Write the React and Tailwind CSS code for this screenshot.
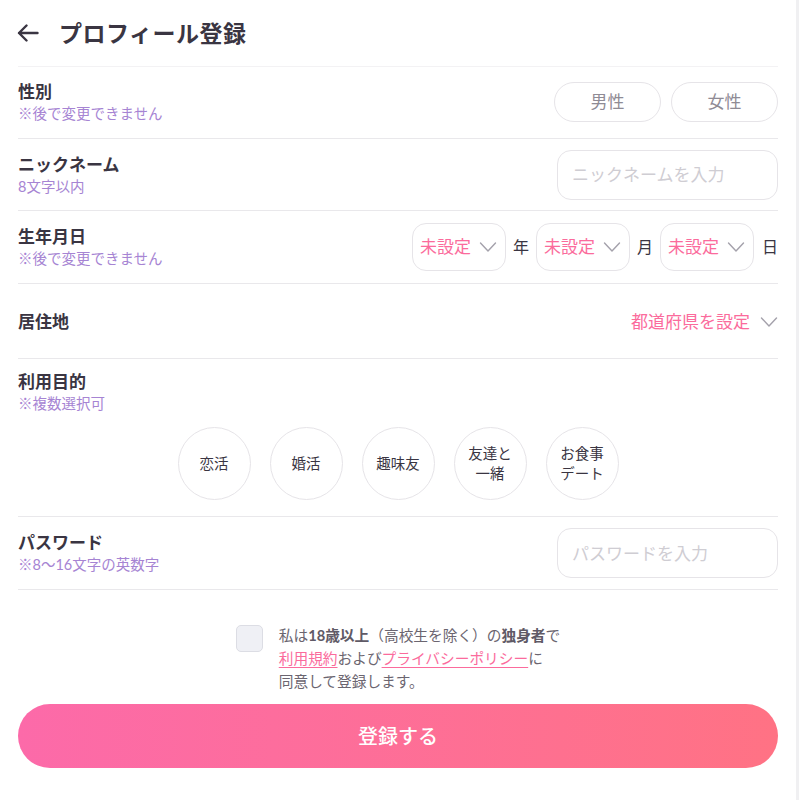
import React, { useState } from "react";

const font = { fontFamily: 'Lato, "Noto Sans CJK JP", sans-serif' };

function Chevron({ className = "" }) {
  return (
    <svg width="18" height="12" viewBox="0 0 18 12" fill="none" className={className}>
      <path d="M1.5 2l7.5 8 7.5-8" stroke="#a4a1ab" strokeWidth="1.4" strokeLinecap="round" strokeLinejoin="round" />
    </svg>
  );
}

function Label({ title, note }) {
  return (
    <div className="flex flex-col">
      <span className="text-[17px] font-bold text-[#3a3542] leading-[24px]">{title}</span>
      {note && <span className="text-[14.5px] text-[#a684d3] leading-[20px]">{note}</span>}
    </div>
  );
}

function DateSelect() {
  return (
    <div className="w-[94px] h-[48px] rounded-[14px] border border-[#e6e4e8] flex items-center justify-between pl-[7px] pr-[8px]">
      <span className="text-[17px] text-[#fb6b9c]">未設定</span>
      <Chevron />
    </div>
  );
}

export default function App() {
  const [gender, setGender] = useState(null);
  const [purposes, setPurposes] = useState([]);
  const [agree, setAgree] = useState(false);

  const togglePurpose = (p) =>
    setPurposes((prev) => (prev.includes(p) ? prev.filter((x) => x !== p) : [...prev, p]));

  const purposeList = [
    ["恋活"],
    ["婚活"],
    ["趣味友"],
    ["友達と", "一緒"],
    ["お食事", "デート"],
  ];

  return (
    <div style={font} className="w-[799px] h-[800px] bg-white flex overflow-hidden">
      <div className="w-[796px] px-[18px]">
        {/* ヘッダー */}
        <div className="h-[67px] flex items-center gap-[20px] border-b border-[#f3f2f4]">
          <svg width="22" height="18" viewBox="0 0 22 18" fill="none" className="ml-[-1px]">
            <path d="M20.5 9H2M9.5 1.5L2 9l7.5 7.5" stroke="#3a3542" strokeWidth="2.4" strokeLinecap="round" strokeLinejoin="round" />
          </svg>
          <h1 className="text-[23px] font-bold text-[#3a3542] tracking-[0.5px]">プロフィール登録</h1>
        </div>

        {/* 性別 */}
        <div className="h-[72px] flex items-center justify-between border-b border-[#e9e8eb] pb-[2px]">
          <Label title="性別" note="※後で変更できません" />
          <div className="flex gap-[10px] mt-[1px]">
            {["男性", "女性"].map((g) => (
              <button
                key={g}
                onClick={() => setGender(g)}
                className={`w-[107px] h-[40px] rounded-full border text-[17px] ${
                  gender === g ? "border-[#fb6b9c] text-[#fb6b9c]" : "border-[#e6e4e8] text-[#8f8b95]"
                }`}
              >
                {g}
              </button>
            ))}
          </div>
        </div>

        {/* ニックネーム */}
        <div className="h-[72px] flex items-center justify-between border-b border-[#e9e8eb]">
          <Label title="ニックネーム" note="8文字以内" />
          <input
            placeholder="ニックネームを入力"
            className="w-[221px] h-[50px] rounded-[14px] border border-[#e6e4e8] px-[14px] text-[17px] text-[#3a3542] placeholder:text-[#cfcdd3] outline-none"
          />
        </div>

        {/* 生年月日 */}
        <div className="h-[73px] flex items-center justify-between border-b border-[#e9e8eb]">
          <Label title="生年月日" note="※後で変更できません" />
          <div className="flex items-center gap-[7px] text-[16px] text-[#3a3542]">
            <DateSelect />
            <span>年</span>
            <DateSelect />
            <span>月</span>
            <DateSelect />
            <span className="ml-[1px]">日</span>
          </div>
        </div>

        {/* 居住地 */}
        <div className="h-[75px] flex items-center justify-between border-b border-[#e9e8eb] pt-[2px]">
          <Label title="居住地" />
          <div className="flex items-center gap-[10px]">
            <span className="text-[17px] text-[#fb6b9c]">都道府県を設定</span>
            <Chevron />
          </div>
        </div>

        {/* 利用目的 */}
        <div className="border-b border-[#e9e8eb] pt-[11px] pb-[16px]">
          <Label title="利用目的" note="※複数選択可" />
          <div className="flex justify-center gap-[19px] mt-[13px]">
            {purposeList.map((lines) => {
              const key = lines.join("");
              const on = purposes.includes(key);
              return (
                <button
                  key={key}
                  onClick={() => togglePurpose(key)}
                  className={`w-[73px] h-[73px] rounded-full border flex flex-col items-center justify-center text-[14.5px] leading-[20px] ${
                    on ? "border-[#fb6b9c] text-[#fb6b9c]" : "border-[#e6e4e8] text-[#3a3542]"
                  }`}
                >
                  {lines.map((l) => (
                    <span key={l}>{l}</span>
                  ))}
                </button>
              );
            })}
          </div>
        </div>

        {/* パスワード */}
        <div className="h-[73px] flex items-center justify-between border-b border-[#e9e8eb]">
          <Label title="パスワード" note="※8〜16文字の英数字" />
          <input
            type="password"
            placeholder="パスワードを入力"
            className="w-[221px] h-[50px] rounded-[14px] border border-[#e6e4e8] px-[14px] text-[17px] text-[#3a3542] placeholder:text-[#cfcdd3] outline-none"
          />
        </div>

        {/* 同意 */}
        <div className="flex justify-center gap-[16px] pt-[34px]">
          <button
            onClick={() => setAgree(!agree)}
            className={`w-[27px] h-[27px] mt-[1px] rounded-[5px] border border-[#dcdde4] shrink-0 ${
              agree ? "bg-[#fb6b9c]" : "bg-[#eff0f5]"
            }`}
          />
          <p className="text-[14.7px] leading-[23px] text-[#6b6570] whitespace-nowrap">
            私は<b className="text-[#5f5a66]">18歳以上</b>（高校生を除く）の<b className="text-[#5f5a66]">独身者</b>で
            <br />
            <a className="text-[#fb6b9c] underline underline-offset-[3px]">利用規約</a>および
            <a className="text-[#fb6b9c] underline underline-offset-[3px]">プライバシーポリシー</a>に
            <br />
            同意して登録します。
          </p>
        </div>

        {/* 登録ボタン */}
        <button className="mt-[11px] w-full h-[64px] rounded-full bg-gradient-to-r from-[#fc6aa9] to-[#ff7284] text-white text-[20px] font-medium">
          登録する
        </button>
      </div>
      <div className="w-[3px] h-full bg-[#f0f0f2] ml-auto" />
    </div>
  );
}
